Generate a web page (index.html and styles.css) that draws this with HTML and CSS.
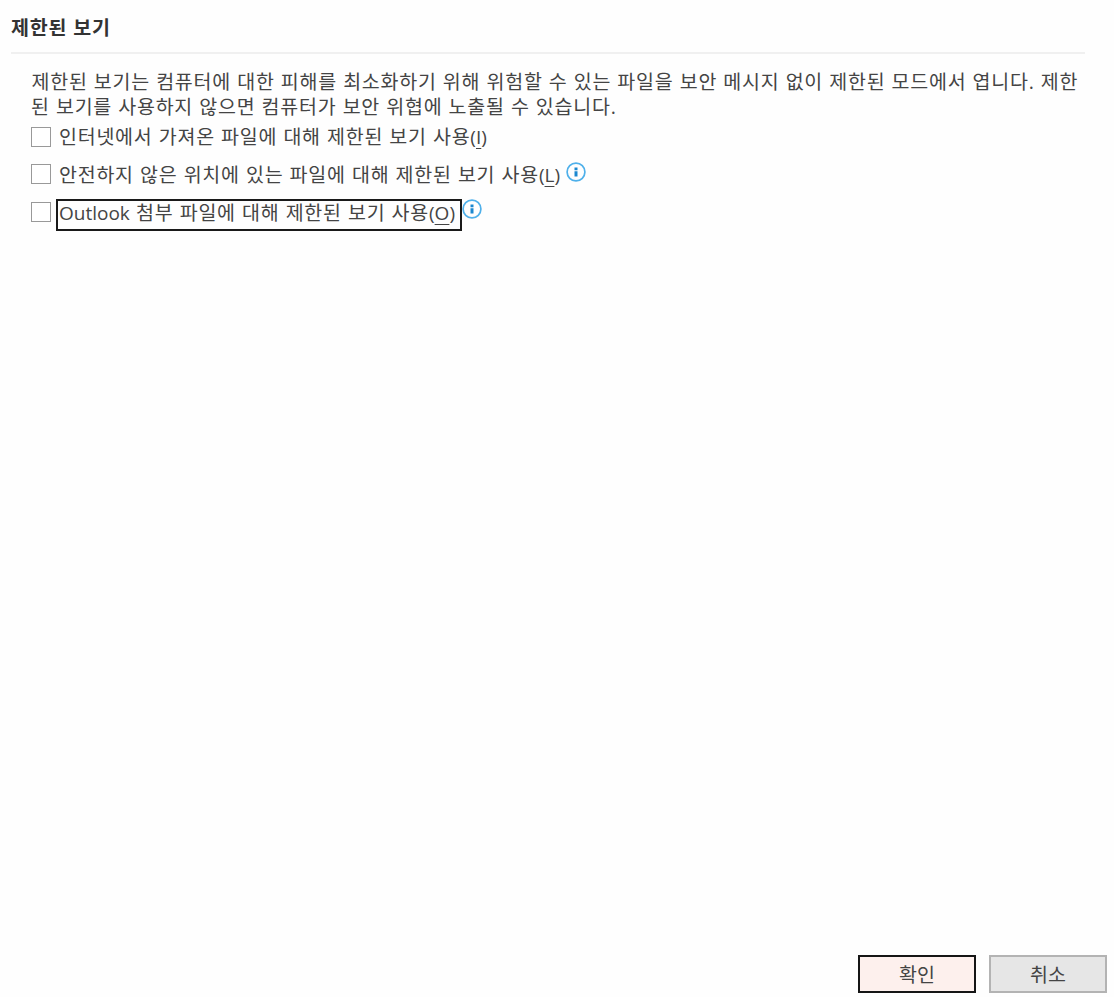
FILE: index.html
```
<!DOCTYPE html>
<html lang="ko">

<head>
    <meta charset="UTF-8">
    <title>제한된 보기</title>
    <link rel="stylesheet" href="styles.css">
</head>

<body>
    <main>
        <h1>제한된 보기</h1>
        <div class="content">
            <p>제한된 보기는 컴퓨터에 대한 피해를 최소화하기 위해 위험할 수 있는 파일을 보안 메시지 없이 제한된 모드에서 엽니다. 제한<br>된 보기를 사용하지 않으면 컴퓨터가 보안 위협에 노출될 수 있습니다.</p>
            <label class="option">
                <input type="checkbox">
                <span class="text">인터넷에서 가져온 파일에 대해 제한된 보기 사용<span class="key">(<u>I</u>)</span></span>
            </label>
            <label class="option">
                <input type="checkbox">
                <span class="text">안전하지 않은 위치에 있는 파일에 대해 제한된 보기 사용<span class="key">(<u>L</u>)</span></span>
                <svg class="info" viewBox="0 0 20 20">
                    <circle cx="10" cy="10" r="8.9" />
                    <path d="M8.5 5.5h3v2.7h-3zM8.5 9.2h3v5.3h-3z" />
                </svg>
            </label>
            <label class="option">
                <input type="checkbox">
                <span class="text focused"><span class="latin">Outlook</span> 첨부 파일에 대해 제한된 보기 사용<span class="key">(<u>O</u>)</span></span>
                <svg class="info" viewBox="0 0 20 20">
                    <circle cx="10" cy="10" r="8.9" />
                    <path d="M8.5 5.5h3v2.7h-3zM8.5 9.2h3v5.3h-3z" />
                </svg>
            </label>
        </div>
    </main>
    <footer>
        <button class="ok">확인</button>
        <button>취소</button>
    </footer>
</body>

</html>
```
FILE: styles.css
```
* {
    box-sizing: border-box;
}

body {
    display: flex;
    flex-direction: column;
    justify-content: space-between;
    height: 997px;
    margin: 0;
    padding: 12px 7px 4px 11px;
    background: #fefefe;
    color: #444;
    font-family: "Open Sans", "Noto Sans CJK KR", sans-serif;
    font-size: 19.5px;
    letter-spacing: 0.76px;
    word-spacing: 0.4px;
    line-height: 25px;
}

h1 {
    height: 42px;
    margin: 0 22px 0 0;
    border-bottom: 2px solid #f0f0f0;
    color: #333;
    font-size: 19.5px;
    line-height: 32px;
}

.content {
    padding: 15px 0 0 20px;
}

p {
    margin: 0 0 -1px;
    text-indent: 0.5px;
    white-space: nowrap;
}

.option {
    display: flex;
    align-items: center;
    height: 37.5px;
    white-space: nowrap;
}

input[type=checkbox] {
    appearance: none;
    width: 20px;
    height: 20px;
    margin: 0 8px 0 0;
    border: 1px solid #999;
    background: white;
}

.text {
    padding-top: 1px;
}

.key,
.latin {
    font-size: 19px;
    letter-spacing: 0;
}

u {
    text-underline-offset: 4px;
    text-decoration-thickness: 1px;
}

.focused {
    height: 32px;
    margin: 6px 0 0 -3px;
    padding: 0 5px 0 1px;
    border: 2px solid #1a1a1a;
    line-height: 23px;
}

.info {
    width: 20px;
    height: 20px;
    margin: -5px 0 0 6px;
    fill: #1b87cf;
}

.info circle {
    fill: none;
    stroke: #4fb0ea;
    stroke-width: 1.7;
}

.focused + .info {
    margin-left: 0;
}

footer {
    display: flex;
    justify-content: flex-end;
    gap: 13px;
}

button {
    width: 118px;
    height: 38px;
    padding: 0;
    border: 2px solid #b3b3b3;
    background: #e6e6e6;
    color: #444;
    font: inherit;
}

button.ok {
    border-color: #151515;
    background: #fdf0ed;
}
```
